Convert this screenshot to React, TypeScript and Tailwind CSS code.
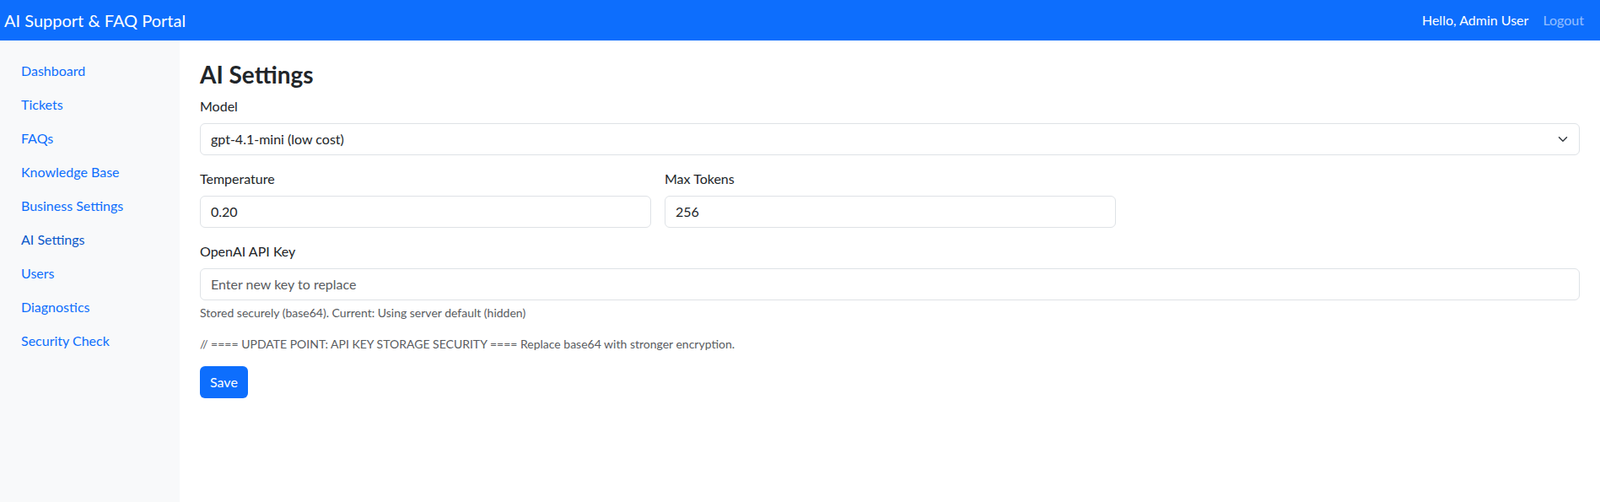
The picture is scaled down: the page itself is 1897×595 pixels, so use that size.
import { useState } from 'react';

const navItems = [
  'Dashboard',
  'Tickets',
  'FAQs',
  'Knowledge Base',
  'Business Settings',
  'AI Settings',
  'Users',
  'Diagnostics',
  'Security Check',
];

export default function App() {
  const [model, setModel] = useState('gpt-4.1-mini');
  const [temperature, setTemperature] = useState('0.20');
  const [maxTokens, setMaxTokens] = useState('256');
  const [apiKey, setApiKey] = useState('');

  return (
    <div className="flex h-screen flex-col bg-white font-['Lato','Noto_Sans',sans-serif] text-[#212529]">
      <header className="flex h-12 shrink-0 items-center justify-between bg-[#0d6efd] pl-[5px] pr-[19px]">
        <span className="text-xl text-white">AI Support &amp; FAQ Portal</span>
        <div className="flex items-center gap-[17px] text-base">
          <span className="text-white">Hello, Admin User</span>
          <a href="#" className="text-white/55">
            Logout
          </a>
        </div>
      </header>

      <div className="flex flex-1">
        <aside className="w-[213px] shrink-0 bg-[#f8f9fa] pl-[25px] pt-4">
          <nav className="flex flex-col">
            {navItems.map((item) => (
              <a
                key={item}
                href="#"
                className={
                  item === 'AI Settings'
                    ? 'flex h-10 items-center text-base text-[#0a58ca]'
                    : 'flex h-10 items-center text-base text-[#0d6efd]'
                }
              >
                {item}
              </a>
            ))}
          </nav>
        </aside>

        <main className="flex-1 p-6">
          <h3 className="mb-2 text-[28px] font-bold leading-[1.2]">AI Settings</h3>

          <div className="mb-4">
            <label className="mb-2 block text-base leading-6">Model</label>
            <div className="relative">
              <select
                value={model}
                onChange={(event) => setModel(event.target.value)}
                className="block h-[38px] w-full appearance-none rounded-md border border-[#dee2e6] bg-white px-3 text-base text-[#212529] outline-none"
              >
                <option value="gpt-4.1-mini">gpt-4.1-mini (low cost)</option>
                <option value="gpt-4.1">gpt-4.1</option>
              </select>
              <svg
                className="pointer-events-none absolute right-3 top-1/2 -translate-y-1/2"
                width="16"
                height="12"
                viewBox="0 0 16 16"
                fill="none"
                stroke="#343a40"
                strokeWidth="2"
                strokeLinecap="round"
                strokeLinejoin="round"
              >
                <path d="m2 5 6 6 6-6" />
              </svg>
            </div>
          </div>

          <div className="mb-4 flex gap-4">
            <div className="w-[535px]">
              <label className="mb-2 block text-base leading-6">Temperature</label>
              <input
                value={temperature}
                onChange={(event) => setTemperature(event.target.value)}
                className="block h-[38px] w-full rounded-md border border-[#dee2e6] px-3 text-base outline-none"
              />
            </div>
            <div className="w-[535px]">
              <label className="mb-2 block text-base leading-6">Max Tokens</label>
              <input
                value={maxTokens}
                onChange={(event) => setMaxTokens(event.target.value)}
                className="block h-[38px] w-full rounded-md border border-[#dee2e6] px-3 text-base outline-none"
              />
            </div>
          </div>

          <div className="mb-4">
            <label className="mb-2 block text-base leading-6">OpenAI API Key</label>
            <input
              value={apiKey}
              onChange={(event) => setApiKey(event.target.value)}
              placeholder="Enter new key to replace"
              className="block h-[38px] w-full rounded-md border border-[#dee2e6] px-3 text-base outline-none placeholder:text-[#595c5f]"
            />
            <div className="mt-1 text-sm leading-[1.5] text-[#595c5f]">
              Stored securely (base64). Current: Using server default (hidden)
            </div>
          </div>

          <p className="mb-4 text-sm leading-[1.5] text-[#595c5f]">
            // ==== UPDATE POINT: API KEY STORAGE SECURITY ==== Replace base64 with stronger encryption.
          </p>

          <button className="h-[38px] rounded-md bg-[#0d6efd] px-3 text-base text-white">Save</button>
        </main>
      </div>
    </div>
  );
}
